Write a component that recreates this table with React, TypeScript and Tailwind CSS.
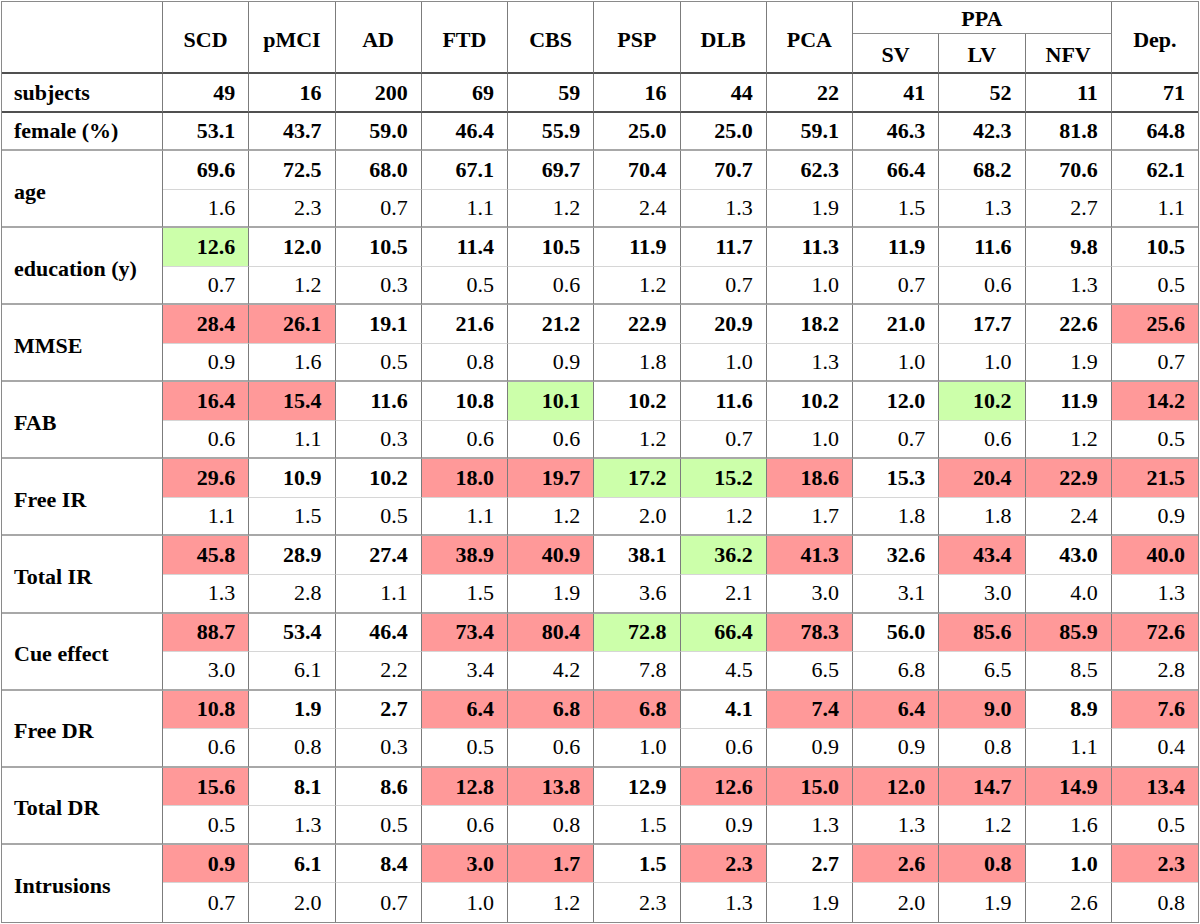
import React from "react";

type Flag = "" | "p" | "g";
type Group = { label: string; means: [string, Flag][]; sds: string[] };

const cols = ["SCD", "pMCI", "AD", "FTD", "CBS", "PSP", "DLB", "PCA"];

const m = (s: string): [string, Flag][] =>
  s.split(" ").map((t) => {
    if (t.endsWith("p")) return [t.slice(0, -1), "p"];
    if (t.endsWith("g")) return [t.slice(0, -1), "g"];
    return [t, ""];
  });

const groups: Group[] = [
  { label: "age", means: m("69.6 72.5 68.0 67.1 69.7 70.4 70.7 62.3 66.4 68.2 70.6 62.1"), sds: "1.6 2.3 0.7 1.1 1.2 2.4 1.3 1.9 1.5 1.3 2.7 1.1".split(" ") },
  { label: "education (y)", means: m("12.6g 12.0 10.5 11.4 10.5 11.9 11.7 11.3 11.9 11.6 9.8 10.5"), sds: "0.7 1.2 0.3 0.5 0.6 1.2 0.7 1.0 0.7 0.6 1.3 0.5".split(" ") },
  { label: "MMSE", means: m("28.4p 26.1p 19.1 21.6 21.2 22.9 20.9 18.2 21.0 17.7 22.6 25.6p"), sds: "0.9 1.6 0.5 0.8 0.9 1.8 1.0 1.3 1.0 1.0 1.9 0.7".split(" ") },
  { label: "FAB", means: m("16.4p 15.4p 11.6 10.8 10.1g 10.2 11.6 10.2 12.0 10.2g 11.9 14.2p"), sds: "0.6 1.1 0.3 0.6 0.6 1.2 0.7 1.0 0.7 0.6 1.2 0.5".split(" ") },
  { label: "Free IR", means: m("29.6p 10.9 10.2 18.0p 19.7p 17.2g 15.2g 18.6p 15.3 20.4p 22.9p 21.5p"), sds: "1.1 1.5 0.5 1.1 1.2 2.0 1.2 1.7 1.8 1.8 2.4 0.9".split(" ") },
  { label: "Total IR", means: m("45.8p 28.9 27.4 38.9p 40.9p 38.1 36.2g 41.3p 32.6 43.4p 43.0 40.0p"), sds: "1.3 2.8 1.1 1.5 1.9 3.6 2.1 3.0 3.1 3.0 4.0 1.3".split(" ") },
  { label: "Cue effect", means: m("88.7p 53.4 46.4 73.4p 80.4p 72.8g 66.4g 78.3p 56.0 85.6p 85.9p 72.6p"), sds: "3.0 6.1 2.2 3.4 4.2 7.8 4.5 6.5 6.8 6.5 8.5 2.8".split(" ") },
  { label: "Free DR", means: m("10.8p 1.9 2.7 6.4p 6.8p 6.8p 4.1 7.4p 6.4p 9.0p 8.9 7.6p"), sds: "0.6 0.8 0.3 0.5 0.6 1.0 0.6 0.9 0.9 0.8 1.1 0.4".split(" ") },
  { label: "Total DR", means: m("15.6p 8.1 8.6 12.8p 13.8p 12.9 12.6p 15.0p 12.0p 14.7p 14.9p 13.4p"), sds: "0.5 1.3 0.5 0.6 0.8 1.5 0.9 1.3 1.3 1.2 1.6 0.5".split(" ") },
  { label: "Intrusions", means: m("0.9p 6.1 8.4 3.0p 1.7p 1.5 2.3p 2.7 2.6p 0.8p 1.0 2.3p"), sds: "0.7 2.0 0.7 1.0 1.2 2.3 1.3 1.9 2.0 1.9 2.6 0.8".split(" ") },
];

const subjects = "49 16 200 69 59 16 44 22 41 52 11 71".split(" ");
const female = "53.1 43.7 59.0 46.4 55.9 25.0 25.0 59.1 46.3 42.3 81.8 64.8".split(" ");

const vr = (i: number) => (i < 11 ? "border-r border-r-[#7c7c7c]" : "");

export default function App() {
  return (
    <div className="w-[1200px] h-[924px] bg-white pl-px pt-px font-['Liberation_Serif','Times_New_Roman',serif] text-[22px] leading-none text-black">
      <div className="grid w-[1198px] grid-cols-[161px_repeat(12,1fr)] grid-rows-[32px_40px_39px_38px_repeat(20,38.55px)] border border-[#8a8a8a]">
        {/* header */}
        <div className="row-span-2 border-r border-r-[#7c7c7c] border-b-2 border-b-[#505050]" />
        {cols.map((c) => (
          <div key={c} className="row-span-2 flex items-center justify-center pt-[5px] font-bold border-r border-r-[#7c7c7c] border-b-2 border-b-[#505050]">
            {c}
          </div>
        ))}
        <div className="col-span-3 flex items-center justify-center pt-[3px] font-bold border-r border-r-[#7c7c7c] border-b border-b-[#8a8a8a]">
          PPA
        </div>
        <div className="row-span-2 flex items-center justify-center pt-[5px] font-bold border-b-2 border-b-[#505050]">
          Dep.
        </div>
        {["SV", "LV", "NFV"].map((c) => (
          <div key={c} className="flex items-center justify-center pt-[3px] font-bold border-r border-r-[#7c7c7c] border-b-2 border-b-[#505050]">
            {c}
          </div>
        ))}

        {/* subjects */}
        <div className="flex items-center pl-[12px] font-bold border-r border-r-[#7c7c7c] border-b-2 border-b-[#505050]">subjects</div>
        {subjects.map((v, i) => (
          <div key={i} className={`flex items-center justify-end pr-[13px] font-bold border-b-2 border-b-[#505050] ${vr(i)}`}>
            {v}
          </div>
        ))}

        {/* female */}
        <div className="flex items-center pl-[12px] font-bold border-r border-r-[#7c7c7c] border-b-2 border-b-[#a8a8a8]">female (%)</div>
        {female.map((v, i) => (
          <div key={i} className={`flex items-center justify-end pr-[13px] font-bold border-b-2 border-b-[#a8a8a8] ${vr(i)}`}>
            {v}
          </div>
        ))}

        {groups.map((g, gi) => {
          const last = gi === groups.length - 1;
          return (
            <React.Fragment key={g.label}>
              <div className={`row-span-2 flex items-center pl-[12px] pt-[6px] font-bold border-r border-r-[#7c7c7c] ${last ? "" : "border-b-2 border-b-[#a8a8a8]"}`}>
                {g.label}
              </div>
              {g.means.map(([v, f], i) => (
                <div
                  key={"m" + i}
                  className={`flex items-center justify-end pr-[13px] font-bold border-b border-b-[#d6d6d6] ${vr(i)} ${
                    f === "p" ? "bg-[#ff9999]" : f === "g" ? "bg-[#ccffaa]" : ""
                  }`}
                >
                  {v}
                </div>
              ))}
              {g.sds.map((v, i) => (
                <div
                  key={"s" + i}
                  className={`flex items-center justify-end pr-[13px] ${last ? "" : "border-b-2 border-b-[#a8a8a8]"} ${vr(i)}`}
                >
                  {v}
                </div>
              ))}
            </React.Fragment>
          );
        })}
      </div>
    </div>
  );
}
